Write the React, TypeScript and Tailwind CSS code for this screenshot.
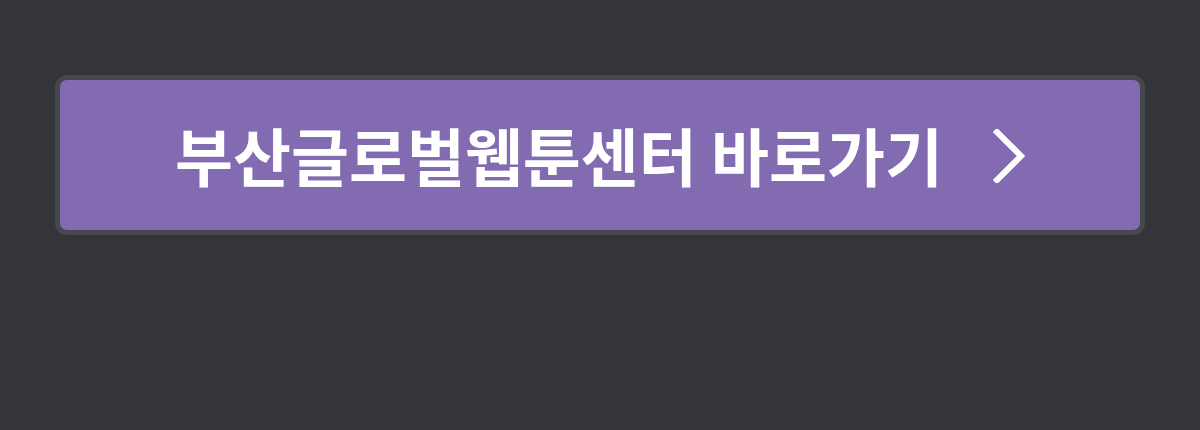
export default function App() {
  return (
    <div className="w-[1200px] h-[430px] bg-[#34353a] pt-[75px] pl-[55px]">
      <a
        href="#"
        className="flex items-center justify-center gap-[50px] w-[1090px] h-[160px] rounded-[12px] border-[5px] border-[#47484d] bg-[#836bb1] text-white"
        style={{ fontFamily: '"Noto Sans CJK KR", "Noto Sans", sans-serif' }}
      >
        <span className="text-[63px] font-bold leading-none tracking-[0px] pb-[4px]">부산글로벌웹툰센터 바로가기</span>
        <svg width="32" height="54" viewBox="0 0 32 54" fill="none" className="mt-[2px]">
          <path d="M4 3 L28 27 L4 51" stroke="white" strokeWidth="6" strokeLinecap="square" />
        </svg>
      </a>
    </div>
  )
}
